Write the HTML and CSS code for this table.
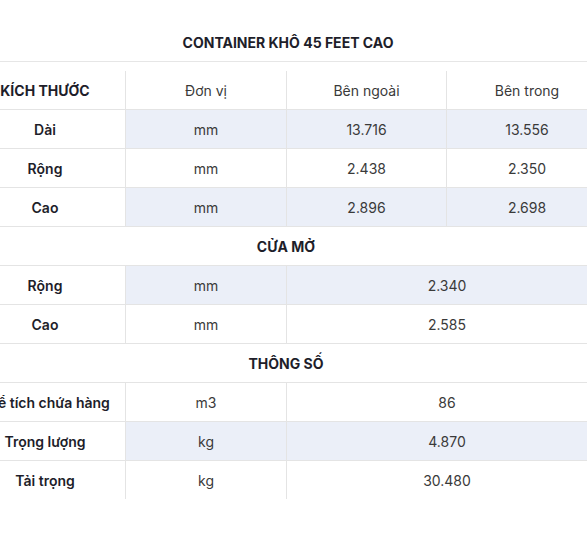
FILE: index.html
```html
<!DOCTYPE html>
<html lang="vi">
<head>
<meta charset="utf-8">
<title>Container khô 45 feet cao</title>
<link rel="stylesheet" href="styles.css">
</head>
<body>
<div class="page">
  <div class="title">CONTAINER KHÔ 45 FEET CAO</div>
  <div class="spacer"></div>
  <div class="row head">
    <div class="c c1 b">KÍCH THƯỚC</div>
    <div class="c c2">Đơn vị</div>
    <div class="c c3">Bên ngoài</div>
    <div class="c c4">Bên trong</div>
  </div>
  <div class="row stripe">
    <div class="c c1 b">Dài</div>
    <div class="c c2">mm</div>
    <div class="c c3">13.716</div>
    <div class="c c4">13.556</div>
  </div>
  <div class="row">
    <div class="c c1 b">Rộng</div>
    <div class="c c2">mm</div>
    <div class="c c3">2.438</div>
    <div class="c c4">2.350</div>
  </div>
  <div class="row stripe">
    <div class="c c1 b">Cao</div>
    <div class="c c2">mm</div>
    <div class="c c3">2.896</div>
    <div class="c c4">2.698</div>
  </div>
  <div class="section">CỬA MỞ</div>
  <div class="row stripe">
    <div class="c c1 b">Rộng</div>
    <div class="c c2">mm</div>
    <div class="c span">2.340</div>
  </div>
  <div class="row">
    <div class="c c1 b">Cao</div>
    <div class="c c2">mm</div>
    <div class="c span">2.585</div>
  </div>
  <div class="section">THÔNG SỐ</div>
  <div class="row">
    <div class="c c1 b">Thể tích chứa hàng</div>
    <div class="c c2">m3</div>
    <div class="c span">86</div>
  </div>
  <div class="row stripe">
    <div class="c c1 b">Trọng lượng</div>
    <div class="c c2">kg</div>
    <div class="c span">4.870</div>
  </div>
  <div class="row last">
    <div class="c c1 b">Tải trọng</div>
    <div class="c c2">kg</div>
    <div class="c span">30.480</div>
  </div>
</div>
</body>
</html>
```

FILE: styles.css
```css
html, body {
  margin: 0;
  padding: 0;
  background: #ffffff;
  overflow: hidden;
}
body {
  font-family: Inter, "Noto Sans", sans-serif;
  font-size: 14px;
  color: #3a3a3a;
}
.page {
  width: 642px;
  margin-left: -35px;
}
.title {
  height: 62px;
  box-sizing: border-box;
  padding-top: 34px;
  line-height: 18px;
  text-align: center;
  font-weight: 700;
  font-size: 14px;
  color: #1e1e2a;
  border-bottom: 1px solid #e6e6e6;
  padding-left: 4px;
}
.spacer {
  height: 9px;
}
.row {
  display: grid;
  grid-template-columns: 161px 161px 160px 160px;
  height: 39px;
  border-bottom: 1px solid #e4e4e4;
  box-sizing: border-box;
}
.row.last {
  border-bottom: none;
  height: 38px;
}
.c {
  display: flex;
  align-items: center;
  justify-content: center;
  border-right: 1px solid #e4e4e4;
  white-space: nowrap;
}
.c4, .span {
  border-right: none;
}
.span {
  grid-column: 3 / 5;
}
.b {
  font-weight: 600;
  color: #1e1e2a;
}
.head .c1 {
  font-weight: 700;
}
.row.stripe .c2,
.row.stripe .c3,
.row.stripe .c4,
.row.stripe .span {
  background: #ebeff8;
}
.section {
  height: 39px;
  box-sizing: border-box;
  border-bottom: 1px solid #e4e4e4;
  display: flex;
  align-items: center;
  justify-content: center;
  font-weight: 700;
  color: #1e1e2a;
}
```
